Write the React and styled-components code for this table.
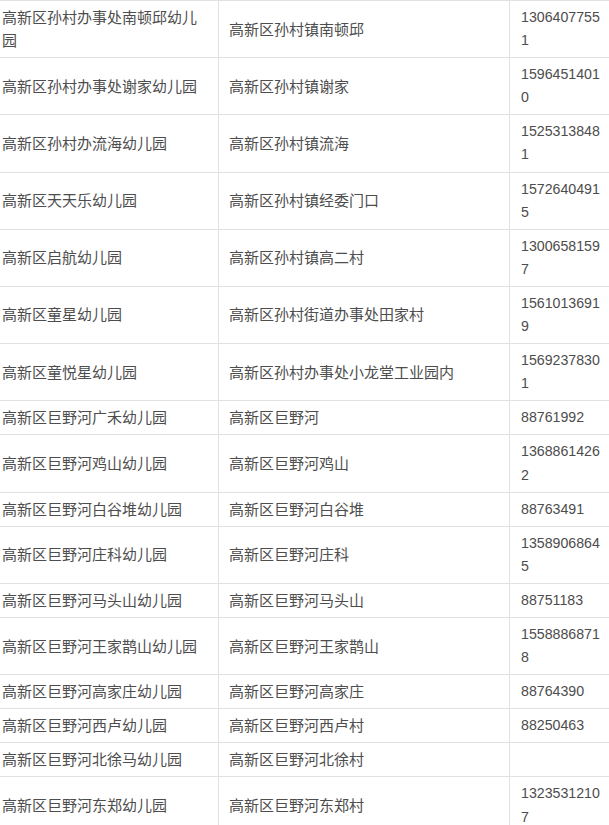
import React from 'react';
import styled, { createGlobalStyle } from 'styled-components';

const GlobalStyle = createGlobalStyle`
  html, body {
    margin: 0;
    padding: 0;
    background: #ffffff;
  }
  body {
    overflow: hidden;
  }
`;

const Page = styled.div`
  width: 609px;
  overflow: hidden;
`;

const Table = styled.table`
  margin-left: -9px;
  width: 626px;
  table-layout: fixed;
  border-collapse: collapse;
  font-family: 'Liberation Sans', 'Noto Sans CJK SC', sans-serif;
  font-size: 15px;
  line-height: 23.1px;
  color: #4d4d4d;
`;

const Column = styled.col`
  width: ${(props) => props.width}px;
`;

const Cell = styled.td`
  border: 1px solid #e1e1e1;
  padding: 5px ${(props) => (props.phone ? '11px' : '10px')};
  vertical-align: middle;
  word-break: break-all;
  font-size: ${(props) => (props.phone ? '14.2px' : '15px')};
`;

const rows = [
  ['高新区孙村办事处南顿邱幼儿园', '高新区孙村镇南顿邱', '13064077551'],
  ['高新区孙村办事处谢家幼儿园', '高新区孙村镇谢家', '15964514010'],
  ['高新区孙村办流海幼儿园', '高新区孙村镇流海', '15253138481'],
  ['高新区天天乐幼儿园', '高新区孙村镇经委门口', '15726404915'],
  ['高新区启航幼儿园', '高新区孙村镇高二村', '13006581597'],
  ['高新区童星幼儿园', '高新区孙村街道办事处田家村', '15610136919'],
  ['高新区童悦星幼儿园', '高新区孙村办事处小龙堂工业园内', '15692378301'],
  ['高新区巨野河广禾幼儿园', '高新区巨野河', '88761992'],
  ['高新区巨野河鸡山幼儿园', '高新区巨野河鸡山', '13688614262'],
  ['高新区巨野河白谷堆幼儿园', '高新区巨野河白谷堆', '88763491'],
  ['高新区巨野河庄科幼儿园', '高新区巨野河庄科', '13589068645'],
  ['高新区巨野河马头山幼儿园', '高新区巨野河马头山', '88751183'],
  ['高新区巨野河王家鹊山幼儿园', '高新区巨野河王家鹊山', '15588868718'],
  ['高新区巨野河高家庄幼儿园', '高新区巨野河高家庄', '88764390'],
  ['高新区巨野河西卢幼儿园', '高新区巨野河西卢村', '88250463'],
  ['高新区巨野河北徐马幼儿园', '高新区巨野河北徐村', ''],
  ['高新区巨野河东郑幼儿园', '高新区巨野河东郑村', '13235312107'],
];

const App = () => (
  <Page>
    <GlobalStyle />
    <Table>
      <colgroup>
        <Column width={227} />
        <Column width={291} />
        <Column width={108} />
      </colgroup>
      <tbody>
        {rows.map(([name, address, phone], i) => (
          <tr key={i}>
            <Cell>{name}</Cell>
            <Cell>{address}</Cell>
            <Cell phone>{phone}</Cell>
          </tr>
        ))}
      </tbody>
    </Table>
  </Page>
);

export default App;
